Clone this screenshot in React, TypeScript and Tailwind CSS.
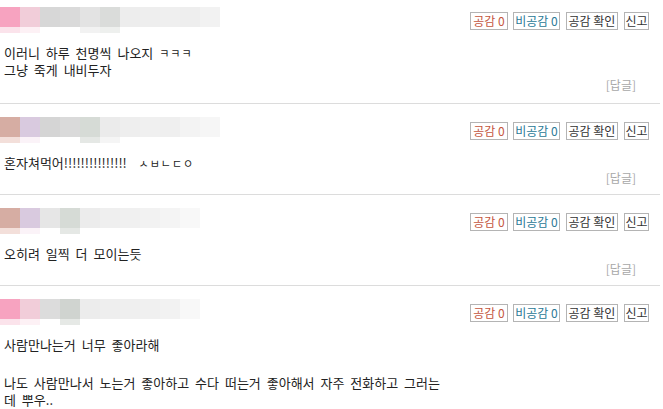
import React from 'react';

type Comment = {
  id: number;
  top: string[];
  bottom: string[];
  body: React.ReactNode;
  first?: boolean;
};

const Jamo: React.FC<{ text: string }> = ({ text }) => (
  <span className="inline-block align-middle text-[11px] leading-[10px] tracking-[1px] -mt-[2px]">{text}</span>
);

const comments: Comment[] = [
  {
    id: 1,
    first: true,
    top: ['#f7a3c0', '#f1cdd9', '#d7d7d7', '#dadada', '#e3e3e3', '#dadcda', '#ededed', '#eeeeee', '#efefef', '#eeeeee', '#f2f2f2'],
    bottom: ['#fbe3eb', '#fdf1f5', '#ffffff', '#ffffff', '#f2f2f2', '#eef0ee'],
    body: (
      <>
        <p>
          이러니 하루 천명씩 나오지 <Jamo text="ㅋㅋㅋ" />
        </p>
        <p>그냥 죽게 내비두자</p>
      </>
    ),
  },
  {
    id: 2,
    top: ['#d6ada3', '#d9cadf', '#d5d5d5', '#dadada', '#d6dbd6', '#ebebeb', '#eeeeee', '#f0f0f0', '#efefef', '#f3f3f3', '#f6f6f6'],
    bottom: ['#f3dfda', '#fbf3f8', '#ffffff', '#ffffff', '#e5e8e5', '#f5f5f5'],
    body: (
      <p>
        혼자쳐먹어!!!!!!!!!!!!!!!&nbsp; <Jamo text="ㅅㅂㄴㄷㅇ" />
      </p>
    ),
  },
  {
    id: 3,
    top: ['#d6ada3', '#d9cadf', '#e6e6e6', '#d6dbd6', '#ececec', '#efefef', '#f0f0f0', '#f2f2f2', '#f4f4f4', '#f8f8f8'],
    bottom: ['#f3dfda', '#fbf3f8', '#ffffff', '#e5e8e5'],
    body: <p>오히려 일찍 더 모이는듯</p>,
  },
  {
    id: 4,
    top: ['#f7a3c0', '#f1cdd9', '#dcdcdc', '#d0d4d0', '#ececec', '#eeeeee', '#efefef', '#f0f0f0', '#f2f2f2', '#f8f8f8'],
    bottom: ['#fbe3eb', '#fdf1f5', '#ffffff', '#e6e9e6'],
    body: (
      <>
        <p>사람만나는거 너무 좋아라해</p>
        <p className="h-[21px]" />
        <p className="w-[440px]">나도 사람만나서 노는거 좋아하고 수다 떠는거 좋아해서 자주 전화하고 그러는데 뿌우..</p>
      </>
    ),
  },
];

const Nick: React.FC<{ top: string[]; bottom: string[] }> = ({ top, bottom }) => (
  <div className="flex flex-col">
    <div className="flex h-[20px]">
      {top.map((c, i) => (
        <div key={i} className="w-[20px] h-full" style={{ backgroundColor: c }} />
      ))}
    </div>
    <div className="flex h-[6px]">
      {bottom.map((c, i) => (
        <div key={i} className="w-[20px] h-full" style={{ backgroundColor: c }} />
      ))}
    </div>
  </div>
);

const Buttons: React.FC = () => (
  <div className="flex items-center mt-[5px] text-[12px] leading-[16px] [word-spacing:0px]">
    <button className="w-[38px] h-[18px] border border-[#b4b4b4] bg-white text-[#c4553e] text-center whitespace-nowrap">공감 0</button>
    <button className="ml-[5px] w-[47px] h-[18px] border border-[#b4b4b4] bg-white text-[#2a7896] text-center whitespace-nowrap">비공감 0</button>
    <button className="ml-[6px] w-[52px] h-[18px] border border-[#b4b4b4] bg-white text-[#333] text-center whitespace-nowrap">공감 확인</button>
    <button className="ml-[6px] w-[25px] h-[18px] border border-[#b4b4b4] bg-white text-[#333] text-center whitespace-nowrap">신고</button>
  </div>
);

export default function App() {
  return (
    <div
      className="w-[663px] h-[409px] overflow-hidden bg-white text-[#222] text-[13px] leading-[17px] [word-spacing:3px]"
      style={{ fontFamily: '"Noto Sans CJK KR", "Noto Sans", sans-serif' }}
    >
      {comments.map((c) => (
        <div
          key={c.id}
          className={`border-b border-[#dcdcdc] mr-[3px] ${c.first ? 'pt-[7px] pb-[11px]' : 'pt-[13px] pb-[9px]'}`}
        >
          <div className="flex justify-between items-start pr-[11px]">
            <Nick top={c.top} bottom={c.bottom} />
            <Buttons />
          </div>
          <div className="mt-[11px] pl-[4px]">{c.body}</div>
          <div className="flex justify-end pr-[24px] text-[12px] text-[#a8a8a8] leading-[14px] [word-spacing:0px]">
            <span>[답글]</span>
          </div>
        </div>
      ))}
    </div>
  );
}
